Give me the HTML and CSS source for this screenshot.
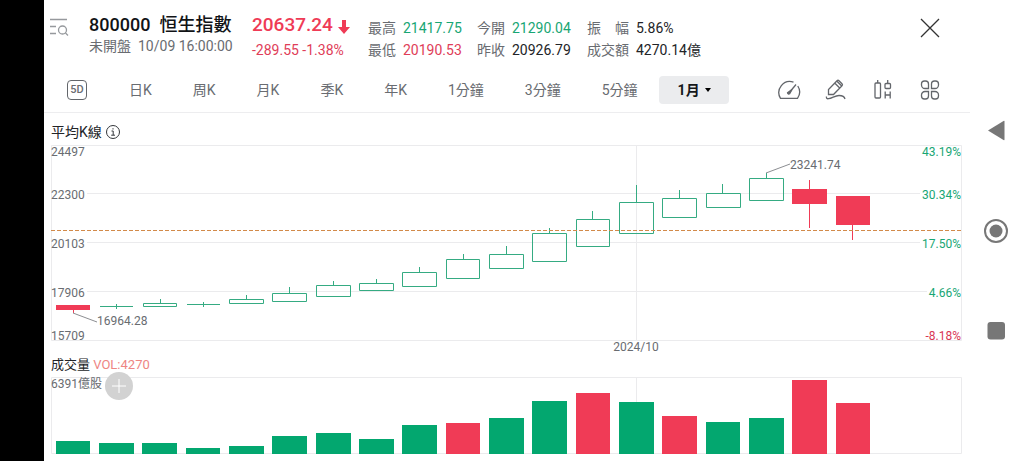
FILE: index.html
```html
<!DOCTYPE html>
<html lang="zh-Hant">
<head>
<meta charset="utf-8">
<meta name="viewport" content="width=device-width, initial-scale=1">
<title>恒生指數 800000</title>
<link rel="stylesheet" href="styles.css">
</head>
<body>
<div class="screen">
  <div class="cutout"></div>
  <main class="app">
    <header class="quote">
      <button class="icon-button search" aria-label="搜尋列表">
        <svg width="20" height="20" viewBox="0 0 20 20"><path d="M0 1.500h17M0 8.500h6M0 15.500h6"/><circle cx="12.500" cy="12" r="4"/><path d="M15.500 15l2.500 2.500"/></svg>
      </button>
      <div class="name">
        <h1 class="title"><span>800000</span><span>恒生指數</span></h1>
        <p class="status"><span>未開盤</span><span>10/09 16:00:00</span></p>
      </div>
      <div class="price">
        <p class="last"><span>20637.24</span>
          <svg width="12" height="14" viewBox="0 0 12 14"><path d="M4 0h4v7h4L6 14 0 7h4z"/></svg>
        </p>
        <p class="change">-289.55 -1.38%</p>
      </div>
      <dl class="stats">
        <div><dt>最高</dt><dd class="up">21417.75</dd></div>
        <div><dt>今開</dt><dd class="up">21290.04</dd></div>
        <div><dt class="spread"><span>振</span><span>幅</span></dt><dd>5.86%</dd></div>
        <div><dt>最低</dt><dd class="down">20190.53</dd></div>
        <div><dt>昨收</dt><dd>20926.79</dd></div>
        <div><dt>成交額</dt><dd>4270.14億</dd></div>
      </dl>
      <button class="icon-button close" aria-label="關閉">
        <svg width="20" height="20" viewBox="0 0 20 20"><path d="M1 1l18 18M19 1L1 19"/></svg>
      </button>
    </header>

    <nav class="toolbar">
      <div class="periods">
        <button class="five-day">5D</button>
        <button class="period">日K</button>
        <button class="period">周K</button>
        <button class="period">月K</button>
        <button class="period">季K</button>
        <button class="period">年K</button>
        <button class="period">1分鐘</button>
        <button class="period">3分鐘</button>
        <button class="period">5分鐘</button>
        <button class="period active"><span>1月</span><svg width="6" height="4" viewBox="0 0 6 4"><path d="M0 0h6L3 4z"/></svg></button>
      </div>
      <div class="tools">
        <button class="icon-button" aria-label="指標">
          <svg width="24" height="24" viewBox="0 0 24 24"><path d="M16.500 4.200A11 11 0 0 0 3.500 20.300H20.500A11 11 0 0 0 20.800 8"/><path d="M12 15l7-8.500"/><path class="solid" d="M10.500 14.800l4.500-3.300-2.400 4.200a1.300 1.300 0 0 1-2.100-.9z"/></svg>
        </button>
        <button class="icon-button" aria-label="畫線">
          <svg width="24" height="24" viewBox="0 0 24 24"><path d="M4.500 16.500v-5L13 2.700q1-1 2 0l3 3q1 1 0 2L9.500 16.500zM10.700 5l5 5M12.700 3l5 5"/><path d="M2.500 18.500q-.5 2.500 2 2.200C8 20.500 11 17.500 15 17.500c3.500 0 5.500 1 6 3.500"/></svg>
        </button>
        <button class="icon-button" aria-label="K線樣式">
          <svg width="24" height="24" viewBox="0 0 24 24"><rect x="4" y="5" width="5.500" height="15" rx="1"/><path d="M6.700 5V2M16.700 5.500V2"/><rect x="14" y="5.500" width="5.500" height="5" rx="1"/><path d="M14.200 13.500v7M19.200 13.500v7M14.200 17h5"/></svg>
        </button>
        <button class="icon-button" aria-label="更多">
          <svg width="24" height="24" viewBox="0 0 24 24"><path d="M10.500 10.500H7A3.500 3.500 0 0 1 3.500 7V6A3 3 0 0 1 6.500 3H7.500A3 3 0 0 1 10.500 6zM13.500 10.500V6a3 3 0 0 1 3-3h1a3 3 0 0 1 3 3v1a3.500 3.500 0 0 1-3.500 3.500zM10.500 13.500V18a3 3 0 0 1-3 3H6.500a3 3 0 0 1-3-3V17A3.500 3.500 0 0 1 7 13.500zM13.500 13.500H17a3.500 3.500 0 0 1 3.500 3.500v1a3 3 0 0 1-3 3h-1a3 3 0 0 1-3-3z"/></svg>
        </button>
      </div>
    </nav>

    <section class="charts">
      <h2 class="chart-title">平均K線
        <svg width="14" height="14" viewBox="0 0 14 14"><circle cx="7" cy="7" r="6.500"/><path d="M5.500 6H7.200v4M5.200 10.200h3.800M7 3.200v1.300"/></svg>
      </h2>
      <svg class="plot" viewBox="0 0 911 210" role="img" aria-label="平均K線圖">
        <path class="grid" d="M.5 .5H910.500V195.500H.5zM36 48.500H869M36 97.500H869M36 146.500H876M585.500 .5V195"/>
        <g class="rise">
          <path d="M49 161.500H82M65.500 159V164M136 159.500H169M152.500 157V162"/>
          <path d="M92.500 158.500h33v3h-33zM109.500 158v-4"/>
          <path d="M178.500 154.500h34v4h-34zM195.500 154v-4"/>
          <path d="M221.500 148.500h34v8h-34zM238.500 148v-6"/>
          <path d="M265.500 140.500h34v11h-34zM282.500 140v-4"/>
          <path d="M308.500 138.500h34v7h-34zM325.500 138v-4"/>
          <path d="M351.500 127.500h34v14h-34zM368.500 127v-5"/>
          <path d="M395.500 114.500h33v19h-33zM412.500 114v-5"/>
          <path d="M438.500 109.500h34v14h-34zM455.500 109v-8"/>
          <path d="M481.500 88.500h34v28h-34zM498.500 88v-5"/>
          <path d="M525.500 74.500h33v27h-33zM541.500 74v-8"/>
          <path d="M568.500 57.500h34v31h-34zM585.500 57v-17"/>
          <path d="M611.500 53.500h34v19h-34zM628.500 53v-8"/>
          <path d="M655.500 48.500h34v14h-34zM671.500 48v-9"/>
          <path d="M698.500 33.500h34v22h-34zM715.500 33v-5"/>
        </g>
        <g class="fall">
          <path d="M5 160h34v5H5zM22 165h1v3h-1z"/>
          <path d="M741 44h35v15h-35zM758 35h1v48h-1z"/>
          <path d="M785 51h34v29h-34zM801 80h1v15h-1z"/>
        </g>
        <path class="last-line" d="M0 85.500H911"/>
        <path class="leader" d="M22 168L46 177M715 28L739 19"/>
        <g class="label">
          <text x="0" y="11">24497</text>
          <text x="0" y="54">22300</text>
          <text x="0" y="103">20103</text>
          <text x="0" y="152">17906</text>
          <text x="0" y="195">15709</text>
          <text x="46" y="180">16964.28</text>
          <text x="739" y="24">23241.74</text>
          <text x="585" y="206" text-anchor="middle">2024/10</text>
        </g>
        <g class="label percent">
          <text x="910" y="11">43.19%</text>
          <text x="910" y="54">30.34%</text>
          <text x="910" y="103">17.50%</text>
          <text x="910" y="152">4.66%</text>
          <text class="negative" x="910" y="195">-8.18%</text>
        </g>
      </svg>
      <h2 class="volume-title">成交量 <span>VOL:4270</span></h2>
      <div class="volume">
        <svg class="plot" viewBox="0 0 911 77" role="img" aria-label="成交量圖">
          <path class="grid" d="M.5 .5H910.500V76.500H.5zM585.500 .5V76"/>
          <path class="bar-up" d="M5 64h34v13H5zM48 66h35v11H48zM91 66h35v11H91zM135 71h34v6h-34zM178 69h35v8h-35zM221 59h35v18h-35zM265 56h35v21h-35zM308 62h35v15h-35zM351 48h35v29h-35zM438 41h35v36h-35zM481 24h35v53h-35zM568 25h35v52h-35zM655 45h34v32h-34zM698 41h35v36h-35z"/>
          <path class="fall" d="M395 46h34v31h-34zM525 16h34v61h-34zM611 39h35v38h-35zM741 3h35v74h-35zM785 26h34v51h-34z"/>
          <text class="label" x="0" y="11">6391億股</text>
        </svg>
        <button class="add" aria-label="新增指標"><svg width="16" height="16" viewBox="0 0 16 16"><path d="M8 1v14M1 8h14"/></svg></button>
      </div>
    </section>
  </main>
  <nav class="system">
    <button class="icon-button" aria-label="返回"><svg width="24" height="24" viewBox="0 0 24 24"><path d="M4 11.500L19.500 2q1-.5 1 .5v18q0 1-1 .5z"/></svg></button>
    <button class="icon-button" aria-label="主畫面"><svg width="24" height="24" viewBox="0 0 24 24"><circle class="ring" cx="12" cy="12" r="11"/><circle cx="12" cy="12" r="6.500"/></svg></button>
    <button class="icon-button" aria-label="最近"><svg width="24" height="24" viewBox="0 0 24 24"><rect x="3.500" y="3" width="17.500" height="17.500" rx="3"/></svg></button>
  </nav>
</div>
</body>
</html>
```
FILE: styles.css
```css
* { box-sizing: border-box; }

body {
  margin: 0;
  background: #fff;
  color: #222427;
  font: 14px/20px Roboto, "Noto Sans CJK TC", sans-serif;
}

h1, h2, p, dl, dd { margin: 0; }

button {
  border: 0;
  padding: 0;
  background: none;
  color: inherit;
  font: inherit;
  cursor: pointer;
}

.screen { display: flex; min-height: 100vh; }
.cutout { flex: 0 0 44px; background: #000; }
.app { flex: 1; min-width: 0; }

.icon-button { display: flex; }
.icon-button svg { fill: none; stroke: #63666b; stroke-width: 1.3; }
.icon-button .solid { fill: #63666b; }

.quote {
  display: flex;
  align-items: flex-start;
  height: 71px;
  padding: 14px 30px 0 6px;
}
.search { margin: 4px 19px 0 0; }
.search svg { stroke: #96999d; }
.name { width: 163px; }
.title {
  display: flex;
  gap: 9px;
  font-size: 18px;
  line-height: 22px;
  font-weight: 500;
  color: #111316;
  white-space: nowrap;
}
.status { display: flex; gap: 7px; color: #696c71; white-space: nowrap; }
.price { width: 116px; color: #e03d58; white-space: nowrap; }
.last {
  display: flex;
  align-items: center;
  gap: 5px;
  font-size: 19px;
  line-height: 22px;
  font-weight: 500;
  color: #ef3b56;
}
.last svg { fill: #ef3b56; margin-top: 4px; }
.change { padding-top: 4px; }

.stats {
  display: grid;
  grid-template-columns: 109px 110px auto;
  grid-auto-rows: 22px;
  padding-top: 4px;
  white-space: nowrap;
}
.stats div { display: flex; gap: 7px; }
.stats dt { color: #696c71; }
.spread { display: flex; justify-content: space-between; width: 42px; }
.stats .up { color: #18a674; }
.stats .down { color: #e03d58; }
.close { margin: 4px 0 0 auto; }
.close svg { stroke: #333; }

.toolbar {
  display: flex;
  justify-content: space-between;
  align-items: center;
  height: 42px;
  padding: 0 28px 4px 23px;
  border-bottom: 1px solid #ededef;
}
.periods { display: flex; align-items: center; gap: 1px; color: #696c71; white-space: nowrap; }
.five-day {
  width: 20px;
  height: 20px;
  margin-right: 21px;
  border: 1px solid #63666b;
  border-radius: 4px;
  font-size: 11px;
  line-height: 18px;
  font-weight: 500;
}
.period { height: 28px; padding: 0 20px; }
.period.active {
  display: flex;
  align-items: center;
  gap: 5px;
  border-radius: 4px;
  background: #ebecee;
  color: #16181b;
  font-weight: 700;
  padding: 0 18px 0 19px;
}
.tools { display: flex; gap: 23px; }

.charts { padding: 0 8px 0 7px; }
.chart-title {
  display: flex;
  align-items: center;
  gap: 4px;
  height: 32px;
  padding-top: 6px;
  font-size: 14px;
  font-weight: 400;
}
.chart-title svg { fill: none; stroke: #33363a; }
.plot { display: block; width: 100%; height: auto; }
.grid { fill: none; stroke: #ebebed; }
.rise { fill: none; stroke: #35ab82; }
.fall { fill: #f03b56; }
.bar-up { fill: #03a76f; }
.last-line { fill: none; stroke: #d28a4a; stroke-dasharray: 4 2; }
.leader { fill: none; stroke: #8c8e92; }
.label { fill: #696c71; font-size: 12px; }
.percent { fill: #18a674; text-anchor: end; }
.negative { fill: #d93654; }
.volume-title { height: 22px; font-size: 13px; line-height: 20px; font-weight: 400; }
.volume-title span { color: #ee8583; }
.volume { position: relative; }
.add {
  position: absolute;
  left: 54px;
  top: -5px;
  display: grid;
  place-items: center;
  width: 28px;
  height: 28px;
  border-radius: 50%;
  background: #d2d2d2;
}
.add svg { fill: none; stroke: #fff; }

.system {
  flex: 0 0 54px;
  display: flex;
  flex-direction: column;
  align-items: center;
  justify-content: center;
  gap: 76px;
  padding-right: 2px;
}
.system .icon-button svg { fill: #777; stroke: none; }
.system .icon-button .ring { fill: none; stroke: #777; stroke-width: 2; }
```
